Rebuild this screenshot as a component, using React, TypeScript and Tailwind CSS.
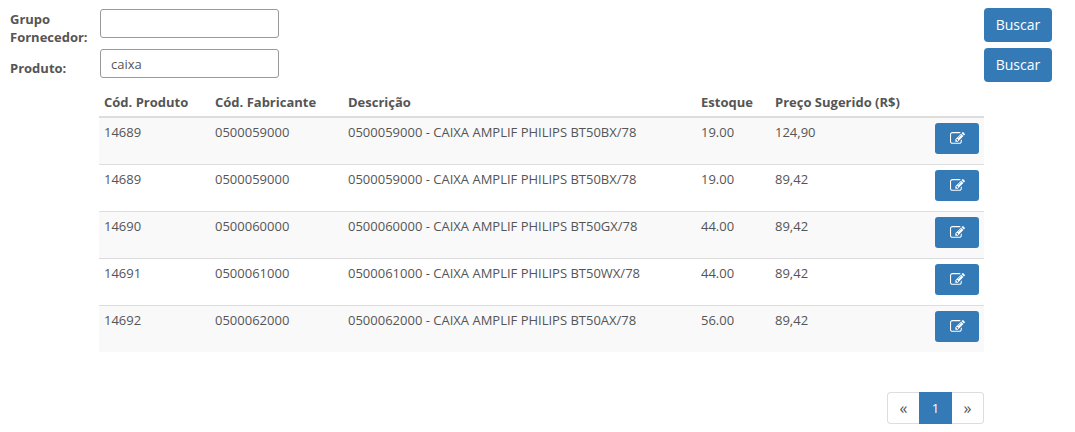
type Product = {
  code: string;
  manufacturerCode: string;
  description: string;
  stock: string;
  price: string;
};

const products: Product[] = [
  {
    code: "14689",
    manufacturerCode: "0500059000",
    description: "0500059000 - CAIXA AMPLIF PHILIPS BT50BX/78",
    stock: "19.00",
    price: "124,90",
  },
  {
    code: "14689",
    manufacturerCode: "0500059000",
    description: "0500059000 - CAIXA AMPLIF PHILIPS BT50BX/78",
    stock: "19.00",
    price: "89,42",
  },
  {
    code: "14690",
    manufacturerCode: "0500060000",
    description: "0500060000 - CAIXA AMPLIF PHILIPS BT50GX/78",
    stock: "44.00",
    price: "89,42",
  },
  {
    code: "14691",
    manufacturerCode: "0500061000",
    description: "0500061000 - CAIXA AMPLIF PHILIPS BT50WX/78",
    stock: "44.00",
    price: "89,42",
  },
  {
    code: "14692",
    manufacturerCode: "0500062000",
    description: "0500062000 - CAIXA AMPLIF PHILIPS BT50AX/78",
    stock: "56.00",
    price: "89,42",
  },
];

function EditIcon() {
  return (
    <svg viewBox="0 0 1792 1792" className="size-[15px] fill-current" aria-hidden="true">
      <path d="M888 1184l116-116-152-152-116 116v56h96v96h56zm440-720q-16-16-33 1l-350 350q-17 17-1 33t33-1l350-350q17-17 1-33zm80 594v190q0 119-84.5 203.5t-203.5 84.5h-832q-119 0-203.5-84.5t-84.5-203.5v-832q0-119 84.5-203.5t203.5-84.5h832q63 0 117 25 15 7 18 23 3 17-9 29l-49 49q-14 14-32 8-23-6-45-6h-832q-66 0-113 47t-47 113v832q0 66 47 113t113 47h832q66 0 113-47t47-113v-126q0-13 9-22l64-64q15-15 35-7t20 29zm-96-738l288 288-672 672h-288v-288zm444 132l-92 92-288-288 92-92q28-28 68-28t68 28l152 152q28 28 28 68t-28 68z" />
    </svg>
  );
}

type SearchRowProps = {
  id: string;
  label: string;
  value?: string;
};

function SearchRow({ id, label, value }: SearchRowProps) {
  return (
    <form className="flex h-10 items-start" onSubmit={(e) => e.preventDefault()}>
      <label htmlFor={id} className="flex h-10 w-[90px] shrink-0 items-center font-bold">
        {label}
      </label>
      <input
        id={id}
        type="text"
        defaultValue={value}
        className="mt-px h-[29px] w-[179px] rounded-[3px] border border-[#999] bg-white px-2.5 outline-none focus:border-[#337ab7]"
      />
      <button
        type="submit"
        className="mr-[23px] ml-auto h-[34px] w-[68px] rounded-[4px] bg-[#337ab7] text-sm text-white hover:bg-[#286090]"
      >
        Buscar
      </button>
    </form>
  );
}

function ProductTable() {
  return (
    <table className="w-full table-fixed text-left">
      <colgroup>
        <col className="w-[111px]" />
        <col className="w-[133px]" />
        <col />
        <col className="w-[74px]" />
        <col className="w-[160px]" />
        <col className="w-[54px]" />
      </colgroup>
      <thead>
        <tr className="border-b-2 border-[#ddd]">
          <th className="p-[5px]">Cód. Produto</th>
          <th className="p-[5px]">Cód. Fabricante</th>
          <th className="p-[5px]">Descrição</th>
          <th className="p-[5px]">Estoque</th>
          <th className="p-[5px]">Preço Sugerido (R$)</th>
          <td></td>
        </tr>
      </thead>
      <tbody>
        {products.map((p, i) => (
          <tr key={i} className="border-t border-[#ddd] align-top odd:bg-[#f9f9f9]">
            <td className="p-[5px]">{p.code}</td>
            <td className="p-[5px]">{p.manufacturerCode}</td>
            <td className="p-[5px]">{p.description}</td>
            <td className="p-[5px]">{p.stock}</td>
            <td className="p-[5px]">{p.price}</td>
            <td className="px-[5px] pt-[5px] pb-2.5">
              <button
                type="button"
                aria-label={`Editar ${p.code}`}
                className="flex h-[31px] w-11 items-center justify-center rounded-[3px] bg-[#337ab7] text-white hover:bg-[#286090]"
              >
                <EditIcon />
              </button>
            </td>
          </tr>
        ))}
      </tbody>
    </table>
  );
}

function Pagination() {
  return (
    <nav className="mt-10 flex justify-end" aria-label="Paginação">
      <a
        href="#"
        aria-label="Anterior"
        className="flex h-8 w-8 items-center justify-center rounded-l-[4px] border border-r-0 border-[#ddd] text-base text-[#555]"
      >
        «
      </a>
      <a
        href="#"
        aria-current="page"
        className="flex h-8 w-[33px] items-center justify-center bg-[#337ab7] text-white"
      >
        1
      </a>
      <a
        href="#"
        aria-label="Próxima"
        className="flex h-8 w-8 items-center justify-center rounded-r-[4px] border border-l-0 border-[#ddd] text-base text-[#555]"
      >
        »
      </a>
    </nav>
  );
}

export default function App() {
  return (
    <main className="bg-white pt-2 pb-2 font-['Open_Sans',sans-serif] text-[13px] leading-[18px] text-[#555]">
      <div className="pl-2.5">
        <SearchRow id="grupo-fornecedor" label="Grupo Fornecedor:" />
        <SearchRow id="produto" label="Produto:" value="caixa" />
      </div>
      <div className="mr-[91px] ml-[99px]">
        <ProductTable />
        <Pagination />
      </div>
    </main>
  );
}
